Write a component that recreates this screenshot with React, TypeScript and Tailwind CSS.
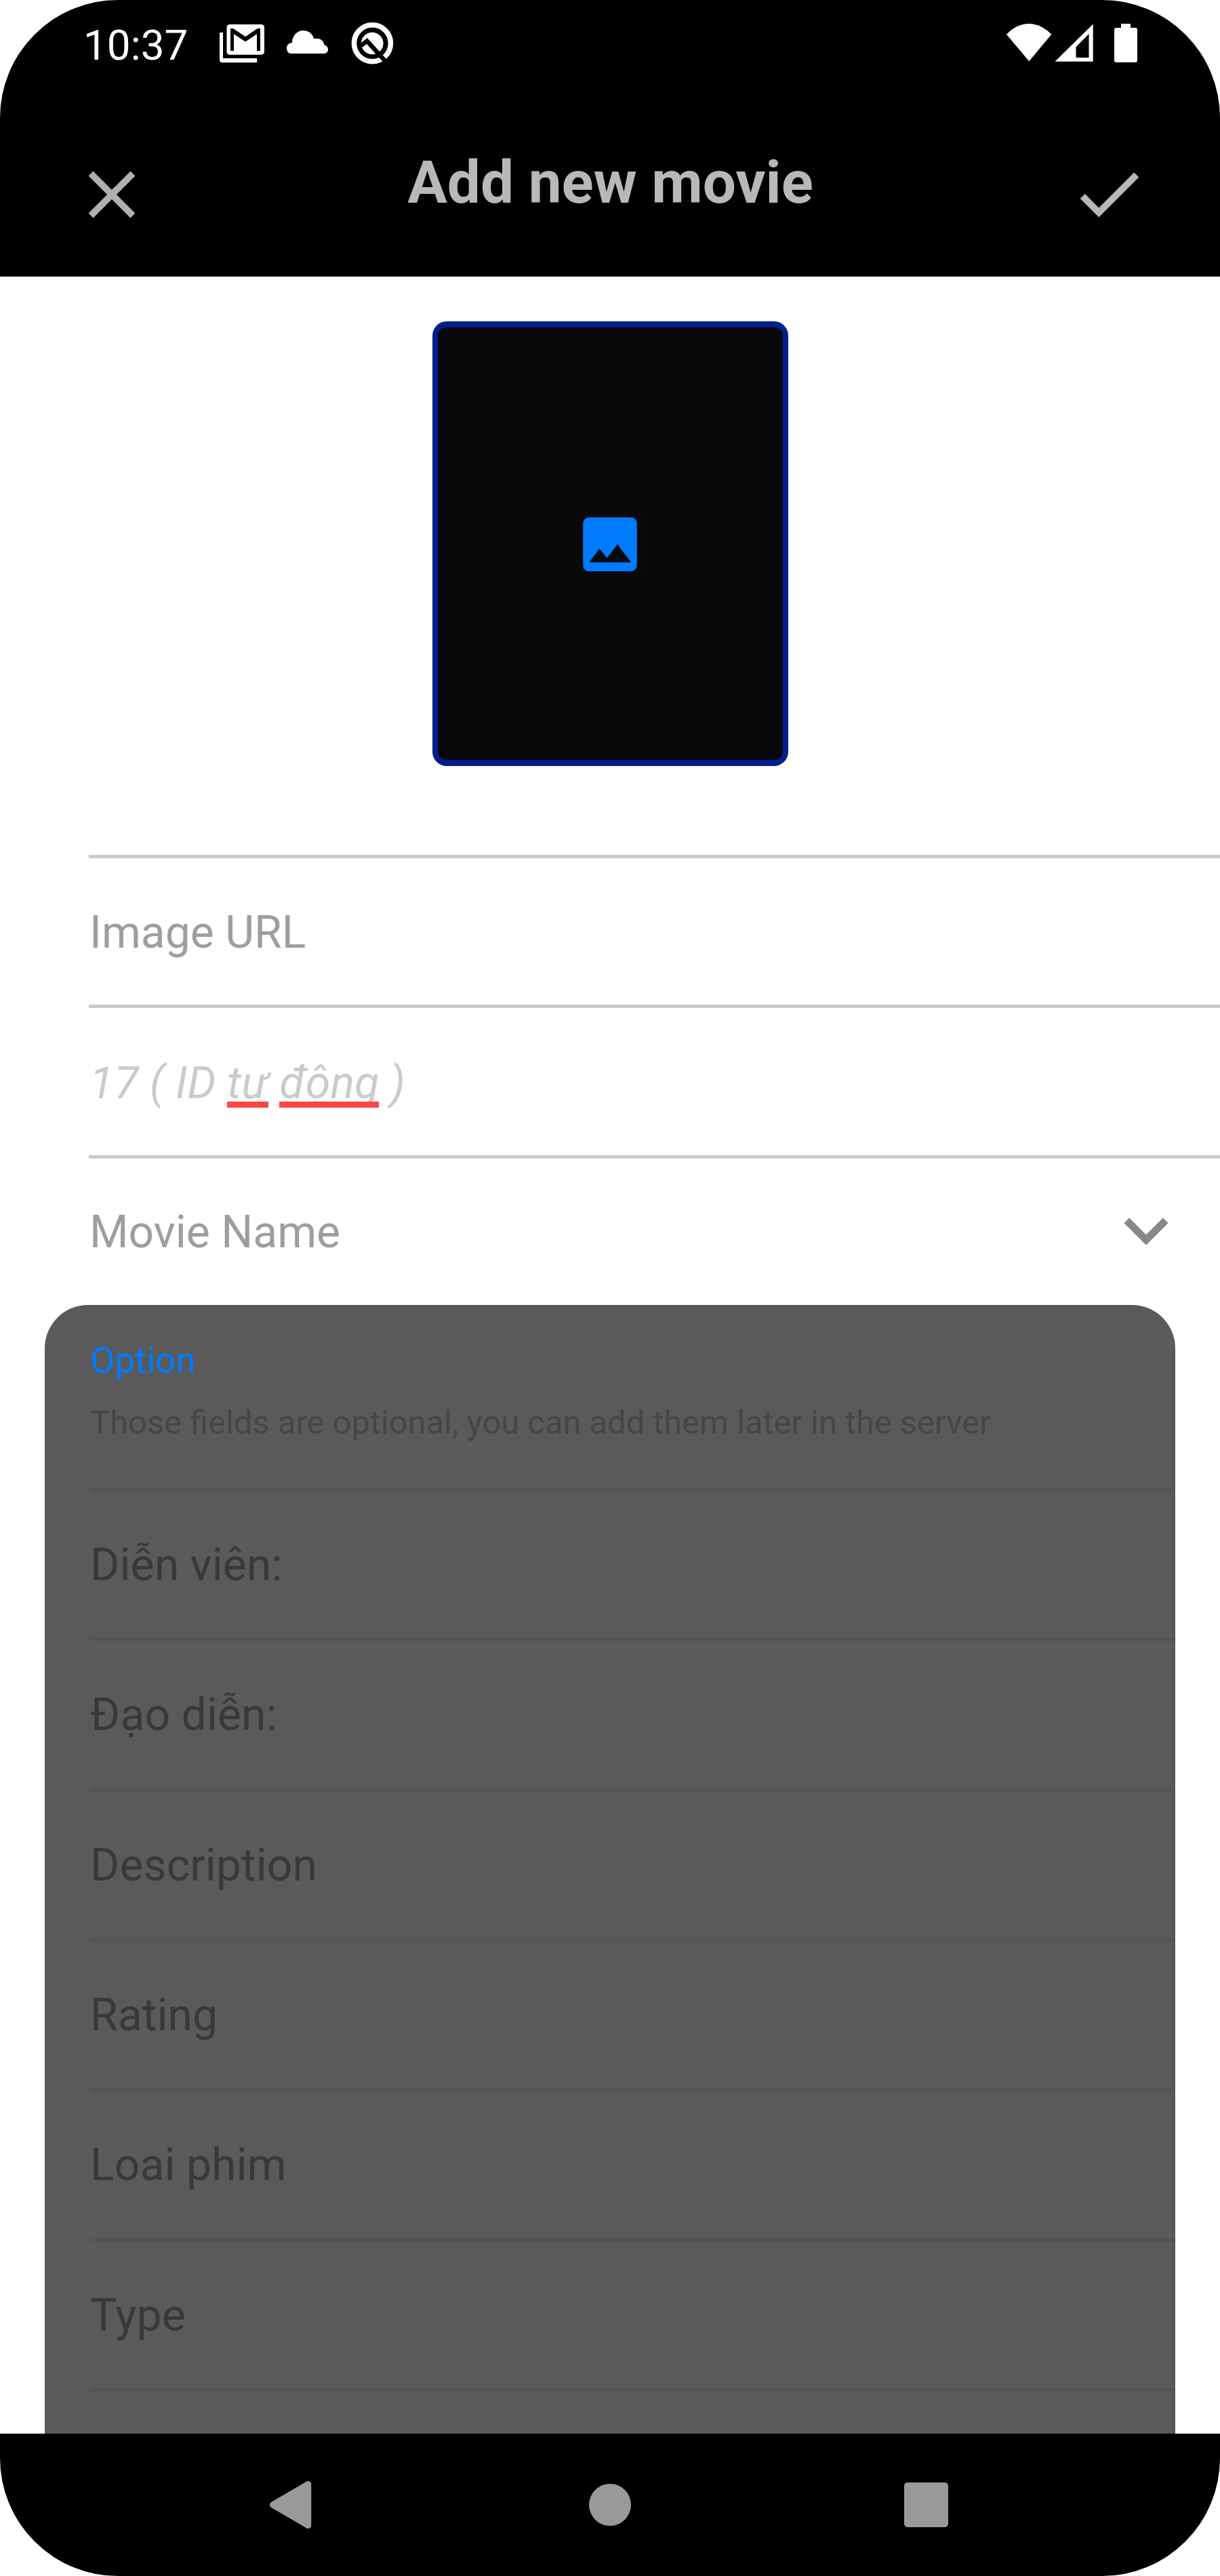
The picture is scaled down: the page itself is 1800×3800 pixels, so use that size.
import type { ReactNode } from "react";
import { MdCheck, MdClose, MdImage, MdKeyboardArrowDown } from "react-icons/md";

function MailIcon() {
  return (
    <svg className="ml-[43px] h-[64px] w-[74px]" viewBox="320 32 74 64" fill="none">
      <path d="M324 48h5v38h50.2v6.3H328a4 4 0 0 1-4-4z" fill="#fff" />
      <rect x="334.5" y="36" width="55.5" height="44.7" rx="4.5" fill="#fff" />
      <path
        d="M340 42h4l18 12 18-12h4v33h-5V50.3L362 61.5 345 50.3V75h-5z"
        fill="#000"
      />
    </svg>
  );
}

function CloudIcon() {
  return (
    <svg className="ml-[26px] h-[64px] w-[68px]" viewBox="420 32 68 64" fill="#fff">
      <path d="M431 63c0-10 7-18 16.5-18 8 0 14 5 15.5 12.2 8.5-2 14.5 2.5 15.5 9.3 3 .5 5.5 3 5.5 6.5 0 3.8-2.5 6-6 6h-48c-4.5 0-7-3.5-7-8.3 0-4 3.5-7.700 8-7.700z" />
    </svg>
  );
}

function SearchBadgeIcon() {
  return (
    <svg className="ml-[28px] h-[64px] w-[66px]" viewBox="516 32 66 64" fill="none">
      <circle cx="549.4" cy="63.8" r="27" stroke="#fff" strokeWidth="7.6" />
      <circle cx="549.2" cy="64" r="16.3" fill="#fff" />
      <path d="M532.5 67.5 541.5 60.5 571 93" stroke="#000" strokeWidth="6.5" />
    </svg>
  );
}

function StatusBar() {
  return (
    <div className="flex h-[128px] items-center">
      <span className="ml-[123px] w-[154px] pt-[6px] text-[62px] leading-[64px] text-white">10:37</span>
      <MailIcon />
      <CloudIcon />
      <SearchBadgeIcon />
      <svg className="ml-auto h-[64px] w-[70px]" viewBox="1483 32 70 64" fill="#fff">
        <path d="M1485 50.7Q1500 35 1518.2 35 1536.5 35 1551.3 50.7L1518.3 90.3z" />
      </svg>
      <svg className="ml-[3px] h-[64px] w-[58px]" viewBox="1556 32 58 64" fill="#fff">
        <path
          fillRule="evenodd"
          d="M1556.5 90.7 1612.7 35.5V90.7zM1587.5 69.3V85H1606.5V50z"
        />
      </svg>
      <svg className="mr-[121px] ml-[28px] h-[64px] w-[37px]" viewBox="1642 32 37 64" fill="#fff">
        <path d="M1654 35h14v6h7a3 3 0 0 1 3 3v45a3 3 0 0 1-3 3h-28a3 3 0 0 1-3-3V44a3 3 0 0 1 3-3h7z" />
      </svg>
    </div>
  );
}

function AppBar() {
  return (
    <div className="flex h-[280px] items-start justify-between pr-[105px] pl-[106px]">
      <MdClose className="mt-[100px] size-[118px] text-[#b0b0b0]" />
      <h1 className="mt-[91px] text-[87.2px] leading-[100px] font-bold whitespace-nowrap text-[#b8b8b8]">
        Add new movie
      </h1>
      <MdCheck className="mt-[99px] size-[118px] text-[#b8b8b8]" />
    </div>
  );
}

function Field({ children }: { children: ReactNode }) {
  return (
    <div className="flex h-[221.33px] items-center border-t-[5px] border-[#cbcbcb] pt-[3px] pl-px text-[66px] leading-[78px] whitespace-pre text-[#9e9e9e]">
      {children}
    </div>
  );
}

function Misspelled({ children }: { children: ReactNode }) {
  return (
    <span className="relative">
      {children}
      <span className="absolute bottom-[2px] left-0 h-[9px] w-full bg-[#ff4444]" />
    </span>
  );
}

const optionalFields = ["Diễn viên:", "Đạo diễn:", "Description", "Rating", "Loai phim", "Type", ""];

export default function App() {
  return (
    <div className="h-[3800px] w-[1800px] overflow-hidden bg-white font-[Roboto,sans-serif]">
      <div className="flex h-full flex-col overflow-hidden rounded-[174px] bg-white">
        <header className="h-[408px] shrink-0 bg-black">
          <StatusBar />
          <AppBar />
        </header>

        <main className="h-[3182px] shrink-0 overflow-hidden">
          <div className="flex h-[853px] justify-center pt-[66px]">
            <div className="ml-px flex h-[656px] w-[525px] justify-center rounded-[21px] border-x-[8px] border-y-[9px] border-[#001f8a] bg-[#070707]">
              <div className="mt-[267px] mr-[2px] size-[106px] bg-[#090909]">
                <MdImage className="size-[106px] text-[#007aff]" />
              </div>
            </div>
          </div>

          <div className="ml-[131px]">
            <Field>Image URL</Field>
            <Field>
              <span className="text-[66.4px] text-[#cbcbcb] italic">
                {"17 ( ID "}
                <Misspelled>tự</Misspelled> <Misspelled>động</Misspelled>
                {" )"}
              </span>
            </Field>
            <Field>
              <span className="grow">Movie Name</span>
              <MdKeyboardArrowDown className="-mt-[6px] mr-[44px] size-[130px] text-[#888888]" />
            </Field>
          </div>

          <section className="mr-[66px] ml-[66px] h-[1665px] overflow-hidden rounded-t-[64px] bg-[#5a5a5a] pt-[52px] pl-[67px]">
            <h2 className="text-[52.8px] leading-[60px] text-[#007aff]">Option</h2>
            <p className="mt-[32px] mb-[66px] text-[48.85px] leading-[60px] whitespace-nowrap text-[#464646]">
              Those fields are optional, you can add them later in the server
            </p>
            {optionalFields.map((label) => (
              <div
                key={label}
                className="flex h-[221.33px] items-center border-t-[5px] border-[#545454] pt-[2px] text-[66.2px] leading-[78px] text-[#393939]"
              >
                {label}
              </div>
            ))}
          </section>
        </main>

        <nav className="flex h-[210px] shrink-0 items-center bg-black">
          <svg className="ml-[396px] h-[74px] w-[66px]" viewBox="396 3658 66 74">
            <path
              d="M402.5 3695 454.7 3664.5V3725.5z"
              fill="#999"
              stroke="#999"
              strokeWidth="9"
              strokeLinejoin="round"
            />
          </svg>
          <span className="ml-[407px] size-[62px] rounded-full bg-[#999999]" />
          <span className="ml-[403px] h-[66px] w-[65px] rounded-[5px] bg-[#999999]" />
        </nav>
      </div>
    </div>
  );
}
